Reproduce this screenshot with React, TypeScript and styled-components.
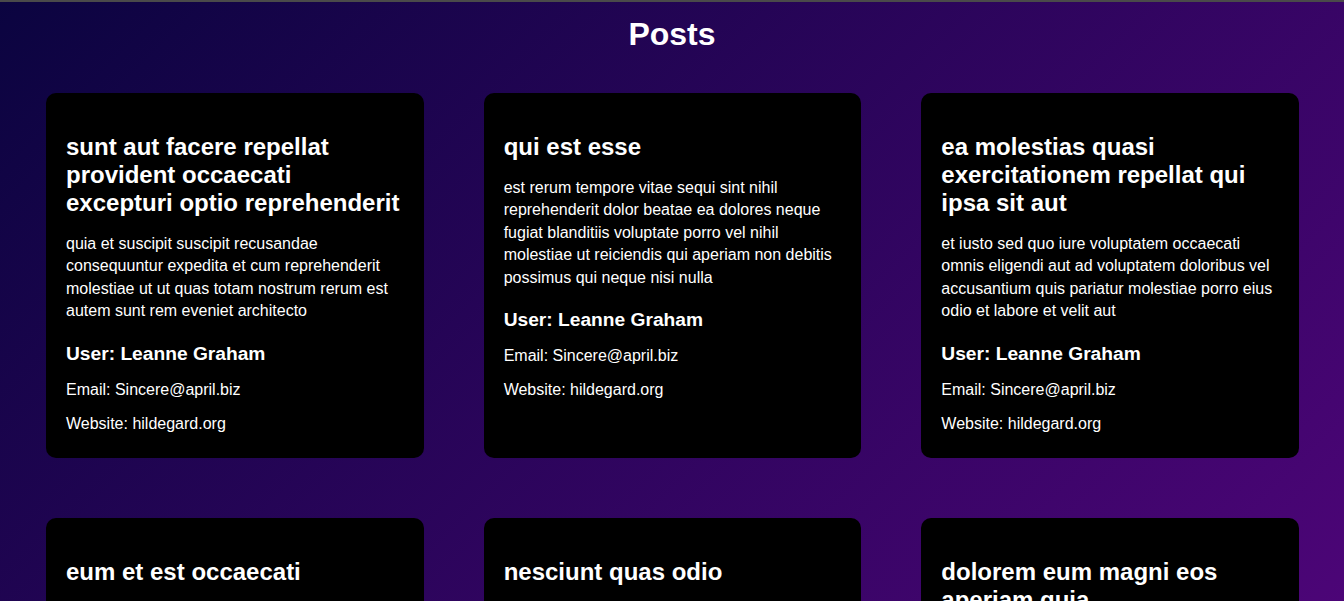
import React from 'react';
import styled, { createGlobalStyle } from 'styled-components';

const GlobalStyle = createGlobalStyle`
  html {
    scrollbar-width: none;
  }

  html::-webkit-scrollbar {
    display: none;
  }

  body {
    margin: 0;
    font-family: 'Liberation Sans', Arial, sans-serif;
    color: #ffffff;
    background: linear-gradient(135deg, #0b0440 0%, #4c0577 100%);
    background-attachment: fixed;
    min-height: 100vh;
  }
`;

const Page = styled('div')`
  border-top: 2px solid #4a4a4a;
  min-height: 100vh;
`;

const Heading = styled('h1')`
  margin: 14px 0 40px;
  font-size: 32px;
  font-weight: 700;
  text-align: center;
  color: #ffffff;
`;

const PostGrid = styled('div')`
  display: grid;
  grid-template-columns: repeat(3, 1fr);
  gap: 60px;
  padding: 0 45px 60px 46px;
`;

const Card = styled('article')`
  background: #000000;
  border-radius: 10px;
  padding: 20px 20px 25px;
`;

const PostTitle = styled('h2')`
  margin: 20px 0 16px;
  font-size: 24px;
  font-weight: 700;
  line-height: normal;
`;

const PostBody = styled('p')`
  margin: 0;
  font-size: 16px;
  line-height: 1.4;
`;

const UserName = styled('h3')`
  margin: 20px 0 16px;
  font-size: 19.2px;
  font-weight: 700;
`;

const Meta = styled('p')`
  margin: 0 0 16px;
  font-size: 16px;

  &:last-child {
    margin-bottom: 0;
  }
`;

type Post = {
  id: number;
  title: string;
  body: string;
};

const user = {
  name: 'Leanne Graham',
  email: 'Sincere@april.biz',
  website: 'hildegard.org',
};

const posts: Post[] = [
  {
    id: 1,
    title: 'sunt aut facere repellat provident occaecati excepturi optio reprehenderit',
    body: 'quia et suscipit suscipit recusandae consequuntur expedita et cum reprehenderit molestiae ut ut quas totam nostrum rerum est autem sunt rem eveniet architecto',
  },
  {
    id: 2,
    title: 'qui est esse',
    body: 'est rerum tempore vitae sequi sint nihil reprehenderit dolor beatae ea dolores neque fugiat blanditiis voluptate porro vel nihil molestiae ut reiciendis qui aperiam non debitis possimus qui neque nisi nulla',
  },
  {
    id: 3,
    title: 'ea molestias quasi exercitationem repellat qui ipsa sit aut',
    body: 'et iusto sed quo iure voluptatem occaecati omnis eligendi aut ad voluptatem doloribus vel accusantium quis pariatur molestiae porro eius odio et labore et velit aut',
  },
  {
    id: 4,
    title: 'eum et est occaecati',
    body: 'ullam et saepe reiciendis voluptatem adipisci sit amet autem assumenda provident rerum culpa quis hic commodi nesciunt rem tenetur doloremque ipsam iure quis sunt voluptatem rerum illo velit',
  },
  {
    id: 5,
    title: 'nesciunt quas odio',
    body: 'repudiandae veniam quaerat sunt sed alias aut fugiat sit autem sed est voluptatem omnis possimus esse voluptatibus quis est aut tenetur dolor neque',
  },
  {
    id: 6,
    title: 'dolorem eum magni eos aperiam quia',
    body: 'ut aspernatur corporis harum nihil quis provident sequi mollitia nobis aliquid molestiae perspiciatis et ea nemo ab reprehenderit accusantium quas voluptate dolores velit et doloremque molestiae',
  },
];

const App: React.FC = () => {
  return (
    <>
      <GlobalStyle />
      <Page>
        <Heading>Posts</Heading>
        <PostGrid>
          {posts.map((post) => (
            <Card key={post.id}>
              <PostTitle>{post.title}</PostTitle>
              <PostBody>{post.body}</PostBody>
              <UserName>User: {user.name}</UserName>
              <Meta>Email: {user.email}</Meta>
              <Meta>Website: {user.website}</Meta>
            </Card>
          ))}
        </PostGrid>
      </Page>
    </>
  );
};

export default App;
